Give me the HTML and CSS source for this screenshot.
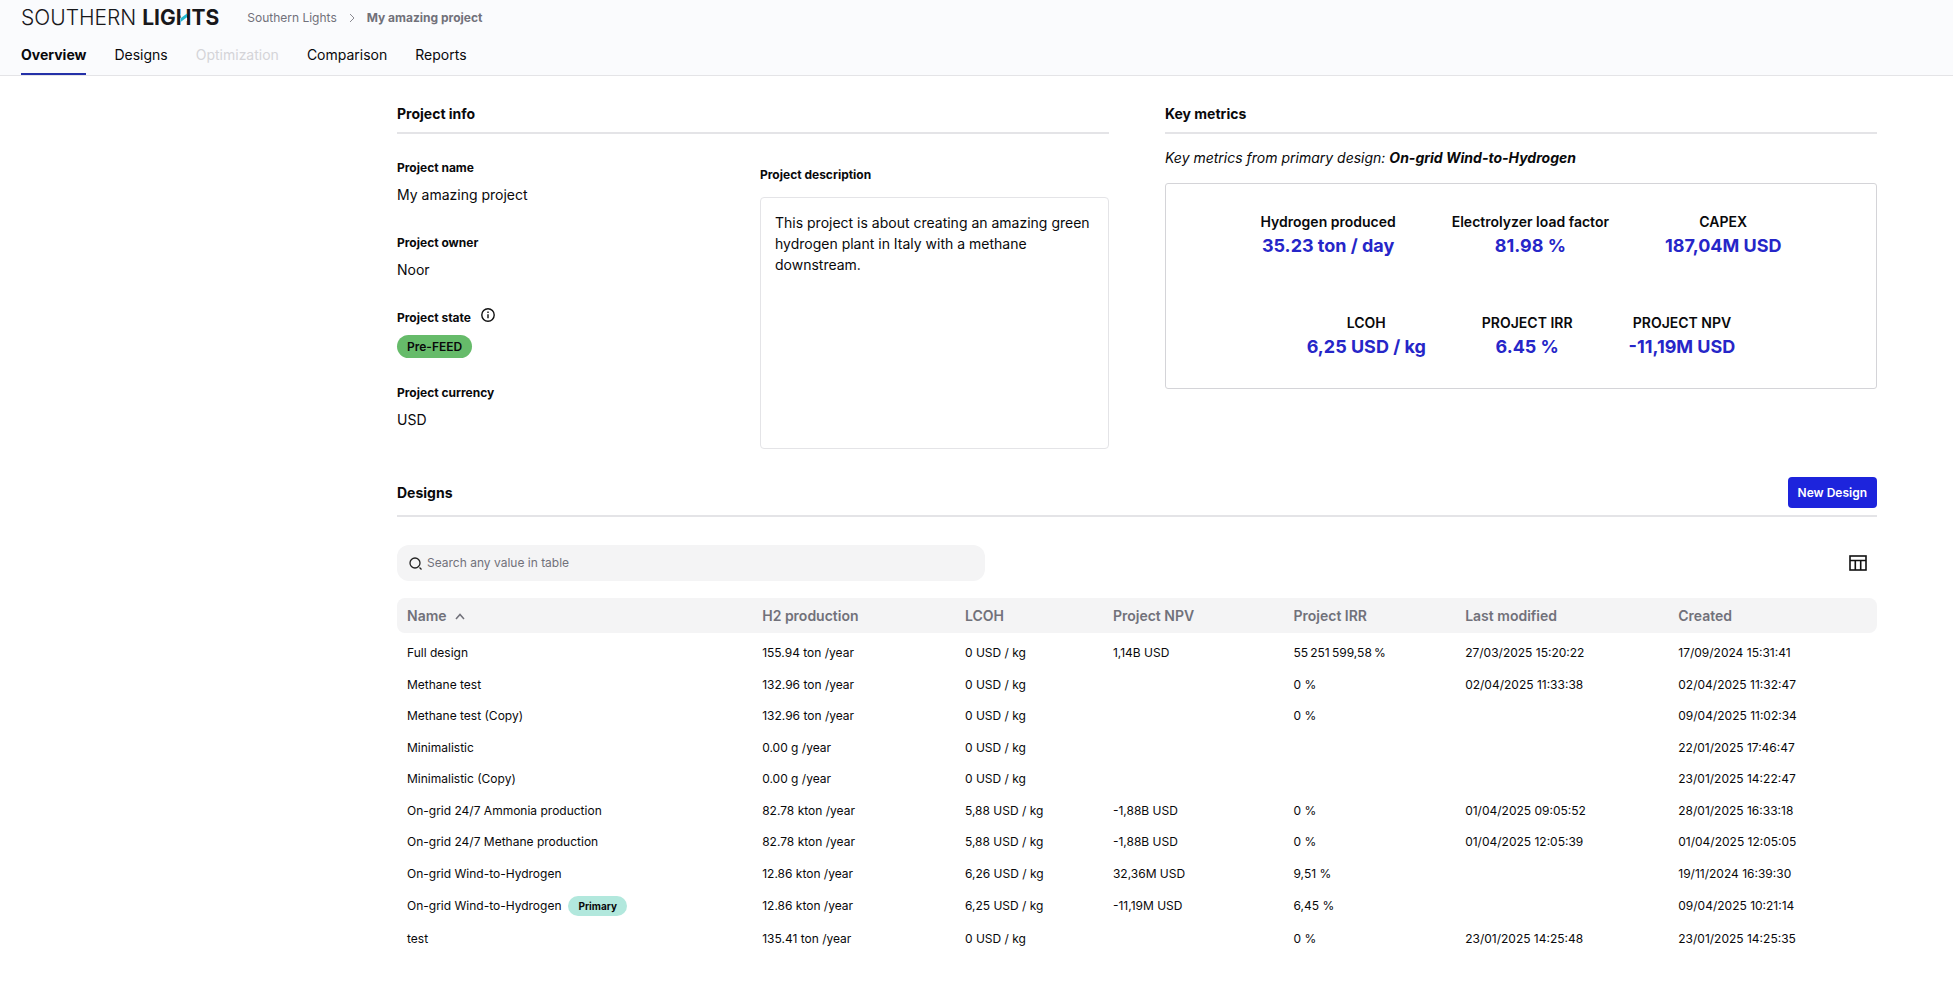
FILE: index.html
```html
<!DOCTYPE html>
<html lang="en">
<head>
    <meta charset="UTF-8">
    <meta name="viewport" content="width=device-width,initial-scale=1">
    <title>My amazing project - Southern Lights</title>
    <link rel="stylesheet" href="styles.css">
</head>
<body>
    <header class="header">
        <div class="topbar">
            <a class="logo" href="#">SOUTHERN <b>LIG<span class="logo-h">H<svg width="16" height="15" viewBox="0 0 16 15" aria-hidden="true"><path d="M4.600 4.500h6.400v6.500H4.600z" fill="#fafbfd"/><path d="M4.600 8.200L11 3.500v3.800L4.600 12z" fill="#22b8cf"/></svg></span>TS</b></a>
            <nav class="crumbs" aria-label="Breadcrumb">
                <a href="#">Southern Lights</a>
                <svg width="6" height="10" viewBox="0 0 6 10" fill="none" stroke="#8b8b92"><path d="M1 1l4 4-4 4"/></svg>
                <b>My amazing project</b>
            </nav>
        </div>
        <nav class="tabs">
            <a class="active" href="#">Overview</a>
            <a href="#">Designs</a>
            <a class="disabled" href="#" aria-disabled="true">Optimization</a>
            <a href="#">Comparison</a>
            <a href="#">Reports</a>
        </nav>
    </header>
    <main class="main">
        <div class="top">
            <section>
                <h2 class="title">Project info</h2>
                <div class="info">
                    <dl class="fields">
                        <div><dt>Project name</dt><dd>My amazing project</dd></div>
                        <div><dt>Project owner</dt><dd>Noor</dd></div>
                        <div>
                            <dt>Project state <svg width="14" height="14" viewBox="0 0 14 14" fill="none" stroke="#111" stroke-width="1.4"><circle cx="7" cy="7" r="6.2"/><path d="M7 6.200v4M7 3.600v1.400"/></svg></dt>
                            <dd><span class="state">Pre-FEED</span></dd>
                        </div>
                        <div><dt>Project currency</dt><dd>USD</dd></div>
                    </dl>
                    <div class="desc">
                        <label for="desc">Project description</label>
                        <textarea id="desc">This project is about creating an amazing green hydrogen plant in Italy with a methane downstream.</textarea>
                    </div>
                </div>
            </section>
            <section>
                <h2 class="title">Key metrics</h2>
                <p class="note">Key metrics from primary design: <b>On-grid Wind-to-Hydrogen</b></p>
                <div class="metrics">
                    <div class="metrics-row">
                        <div class="metric">Hydrogen produced<strong>35.23 ton / day</strong></div>
                        <div class="metric">Electrolyzer load factor<strong>81.98 %</strong></div>
                        <div class="metric">CAPEX<strong>187,04M USD</strong></div>
                    </div>
                    <div class="metrics-row">
                        <div class="metric">LCOH<strong>6,25 USD / kg</strong></div>
                        <div class="metric">PROJECT IRR<strong>6.45 %</strong></div>
                        <div class="metric">PROJECT NPV<strong>-11,19M USD</strong></div>
                    </div>
                </div>
            </section>
        </div>
        <section class="designs">
            <div class="designs-head">
                <h2>Designs</h2>
                <button class="new" type="button">New Design</button>
            </div>
            <div class="tools">
                <label class="search">
                    <svg width="13" height="13" viewBox="0 0 13 13" fill="none" stroke="#222" stroke-width="1.3"><circle cx="6" cy="6" r="5"/><path d="M10.500 10.500l2 2"/></svg>
                    <input type="search" placeholder="Search any value in table" aria-label="Search any value in table">
                </label>
                <button class="columns" type="button" aria-label="Columns">
                    <svg width="18" height="16" viewBox="0 0 18 16" fill="none" stroke="#111" stroke-width="1.6"><rect x="1" y="1" width="16" height="14"/><path d="M1 5.500h16M6.300 5.500V15M11.700 5.500V15"/></svg>
                </button>
            </div>
            <table class="table">
                <colgroup><col class="c-name"><col class="c-h2"><col class="c-lcoh"><col class="c-npv"><col class="c-irr"><col class="c-mod"><col></colgroup>
                <thead>
                    <tr><th>Name <svg width="10" height="7" viewBox="0 0 10 7" fill="none" stroke="#71717a" stroke-width="1.5"><path d="M1 6l4-4.500L9 6"/></svg></th><th>H2 production</th><th>LCOH</th><th>Project NPV</th><th>Project IRR</th><th>Last modified</th><th>Created</th></tr>
                </thead>
                <tbody>
                    <tr><td>Full design</td><td>155.94 ton /year</td><td>0 USD / kg</td><td>1,14B USD</td><td>55&#8239;251&#8239;599,58&#8239;%</td><td>27/03/2025 15:20:22</td><td>17/09/2024 15:31:41</td></tr>
                    <tr><td>Methane test</td><td>132.96 ton /year</td><td>0 USD / kg</td><td></td><td>0 %</td><td>02/04/2025 11:33:38</td><td>02/04/2025 11:32:47</td></tr>
                    <tr><td>Methane test (Copy)</td><td>132.96 ton /year</td><td>0 USD / kg</td><td></td><td>0 %</td><td></td><td>09/04/2025 11:02:34</td></tr>
                    <tr><td>Minimalistic</td><td>0.00 g /year</td><td>0 USD / kg</td><td></td><td></td><td></td><td>22/01/2025 17:46:47</td></tr>
                    <tr><td>Minimalistic (Copy)</td><td>0.00 g /year</td><td>0 USD / kg</td><td></td><td></td><td></td><td>23/01/2025 14:22:47</td></tr>
                    <tr><td>On-grid 24/7 Ammonia production</td><td>82.78 kton /year</td><td>5,88 USD / kg</td><td>-1,88B USD</td><td>0 %</td><td>01/04/2025 09:05:52</td><td>28/01/2025 16:33:18</td></tr>
                    <tr><td>On-grid 24/7 Methane production</td><td>82.78 kton /year</td><td>5,88 USD / kg</td><td>-1,88B USD</td><td>0 %</td><td>01/04/2025 12:05:39</td><td>01/04/2025 12:05:05</td></tr>
                    <tr><td>On-grid Wind-to-Hydrogen</td><td>12.86 kton /year</td><td>6,26 USD / kg</td><td>32,36M USD</td><td>9,51 %</td><td></td><td>19/11/2024 16:39:30</td></tr>
                    <tr class="is-primary"><td>On-grid Wind-to-Hydrogen<span class="primary">Primary</span></td><td>12.86 kton /year</td><td>6,25 USD / kg</td><td>-11,19M USD</td><td>6,45 %</td><td></td><td>09/04/2025 10:21:14</td></tr>
                    <tr><td>test</td><td>135.41 ton /year</td><td>0 USD / kg</td><td></td><td>0 %</td><td>23/01/2025 14:25:48</td><td>23/01/2025 14:25:35</td></tr>
                </tbody>
            </table>
        </section>
    </main>
</body>
</html>
```
FILE: styles.css
```css
*{
    box-sizing: border-box;
}
body{
    margin: 0;
    font: 14px/20px Inter, "Liberation Sans", sans-serif;
    color: #09090b;
    background: #fff;
}
h2,p,dl,dd{
    margin: 0;
}
a{
    color: inherit;
    text-decoration: none;
}
button,input,textarea{
    font: inherit;
    color: inherit;
}
/* header */
.header{
    height: 76px;
    padding: 0 21px;
    background: #fafbfd;
    border-bottom: 1px solid #e4e4e7;
}
.topbar{
    display: flex;
    align-items: center;
    gap: 28px;
    height: 36px;
}
.logo{
    font-size: 21px;
    font-weight: 300;
    color: #18181b;
}
.logo b{
    font-weight: 700;
}
.logo-h{
    position: relative;
}
.logo-h svg{
    position: absolute;
    left: 0;
    top: 5px;
}
.crumbs{
    display: flex;
    align-items: center;
    gap: 12px;
    font-size: 12px;
    color: #71717a;
}
.tabs{
    display: flex;
    gap: 28px;
}
.tabs a{
    height: 39px;
    line-height: 38px;
}
.tabs .active{
    font-weight: 700;
    border-bottom: 2px solid #2430a8;
}
.tabs .disabled{
    color: #d4d4d8;
}
/* content */
.main{
    margin: 0 76px 0 397px;
    padding-top: 28px;
}
.top{
    display: grid;
    grid-template-columns: 1fr 1fr;
    gap: 56px;
}
.title,.designs h2{
    font-size: 14px;
    font-weight: 700;
}
.title{
    padding-bottom: 8px;
    border-bottom: 2px solid #e4e4e7;
}
.info{
    display: grid;
    grid-template-columns: 1fr 1fr;
    gap: 14px;
}
.fields{
    display: grid;
    grid-auto-rows: 75px;
    padding-top: 24px;
}
dt,.desc label{
    font-size: 12px;
    font-weight: 700;
}
dt{
    display: flex;
    gap: 10px;
}
dd{
    padding-top: 7px;
}
.state{
    display: inline-block;
    padding: 0 10px;
    border-radius: 12px;
    background: #66bb6a;
    font-size: 12px;
    font-weight: 600;
    line-height: 23px;
}
.desc{
    display: flex;
    flex-direction: column;
    gap: 12px;
    padding-top: 31px;
}
.desc textarea{
    height: 252px;
    padding: 14px;
    border: 1px solid #e4e4e7;
    border-radius: 4px;
    background: #fff;
    line-height: 21px;
    resize: none;
}
.note{
    padding: 14px 0 15px;
    font-style: italic;
}
.metrics{
    display: grid;
    gap: 54px;
    padding: 28px;
    border: 1px solid #d4d4d8;
    border-radius: 3px;
}
.metrics-row{
    display: flex;
    justify-content: center;
    gap: 56px;
}
.metric{
    font-weight: 600;
    text-align: center;
}
.metric strong{
    display: block;
    font-size: 18px;
    font-weight: 700;
    line-height: 27px;
    color: #2626c8;
}
/* designs */
.designs{
    padding-top: 19px;
}
.designs-head{
    display: flex;
    align-items: center;
    justify-content: space-between;
    padding-bottom: 7px;
    border-bottom: 2px solid #e4e4e7;
}
.new{
    padding: 0 10px;
    border: 0;
    border-radius: 4px;
    background: #1d24dc;
    color: #fff;
    font-size: 12px;
    font-weight: 600;
    line-height: 31px;
}
.tools{
    display: flex;
    align-items: center;
    justify-content: space-between;
    padding: 28px 10px 17px 0;
}
.search{
    display: flex;
    align-items: center;
    gap: 5px;
    width: 40%;
    height: 36px;
    padding: 0 12px;
    border-radius: 12px;
    background: #f4f4f5;
}
.search input{
    flex: 1;
    padding: 0;
    border: 0;
    outline: 0;
    background: none;
    font-size: 12px;
}
.search input::placeholder{
    color: #71717a;
}
.columns{
    display: flex;
    padding: 0;
    border: 0;
    background: none;
}
.table{
    width: 100%;
    table-layout: fixed;
    border-collapse: collapse;
    font-size: 12px;
    white-space: nowrap;
}
.c-name{ width: 24%; }
.c-h2{ width: 13.7%; }
.c-lcoh{ width: 10%; }
.c-npv{ width: 12.2%; }
.c-irr{ width: 11.6%; }
.c-mod{ width: 14.4%; }
.table th{
    height: 35px;
    padding: 0 10px;
    background: #f4f4f5;
    color: #71717a;
    font-size: 14px;
    font-weight: 600;
    text-align: left;
}
.table th:first-child{
    border-radius: 8px 0 0 8px;
}
.table th:last-child{
    border-radius: 0 8px 8px 0;
}
.table th svg{
    margin-left: 5px;
    vertical-align: 1px;
}
.table td{
    height: 31px;
    padding: 0 10px;
}
.table tr:nth-child(odd) td{
    height: 32px;
}
.table tbody::before{
    content: "";
    display: block;
    height: 4px;
}
.table tr.is-primary:nth-child(odd) td{
    height: 34px;
}
.primary{
    display: inline-block;
    margin-left: 7px;
    padding: 0 10px;
    border-radius: 10px;
    background: #b2e8dd;
    font-size: 10px;
    font-weight: 700;
    line-height: 20px;
}
```
